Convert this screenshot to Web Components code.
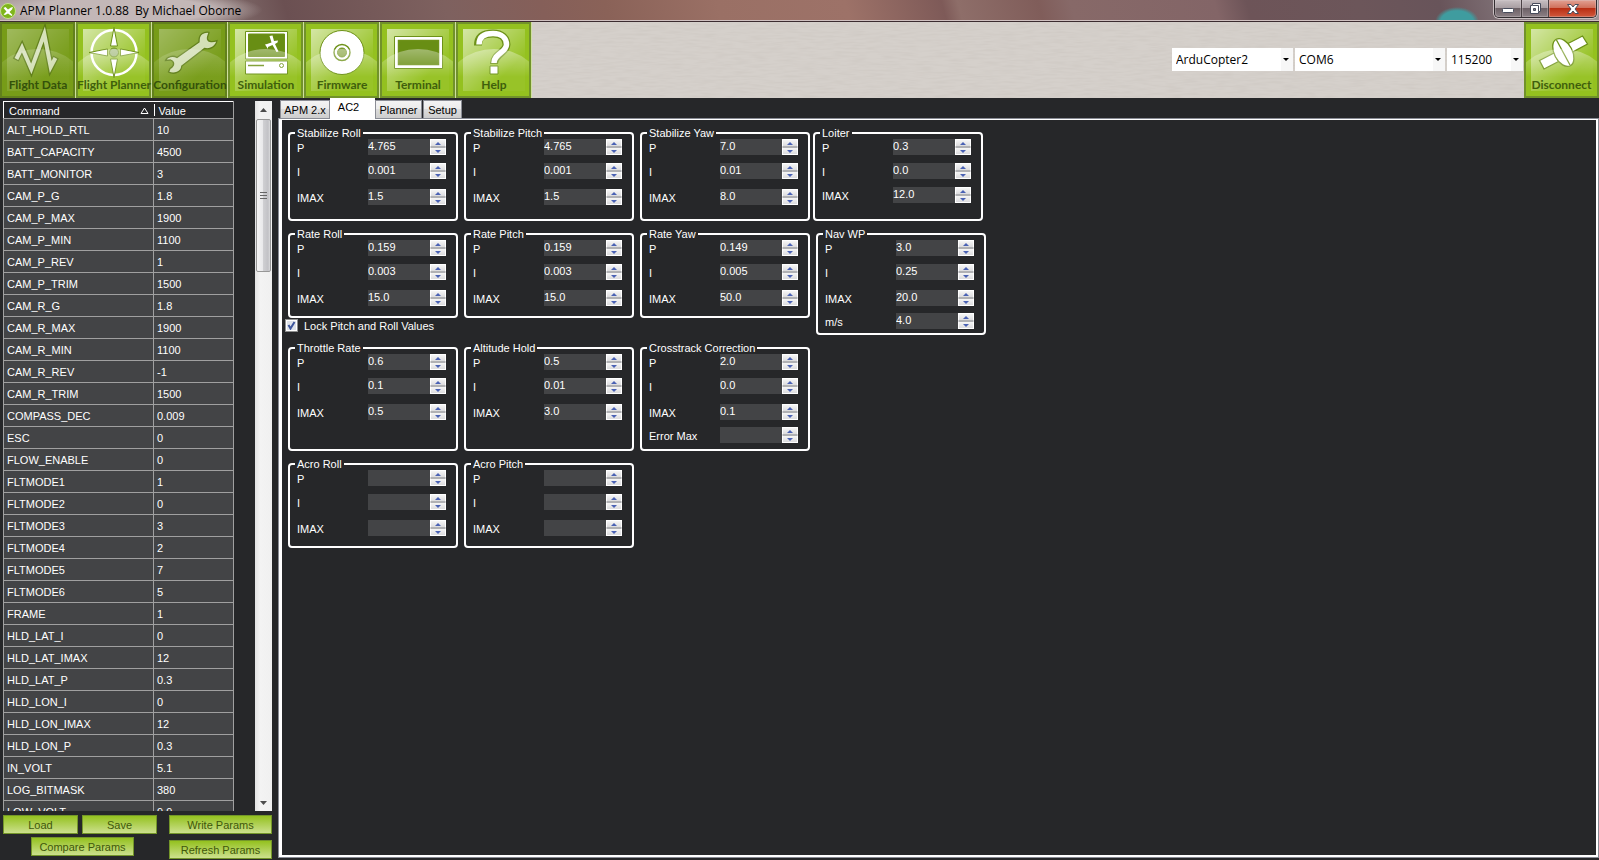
<!DOCTYPE html>
<html lang="en">
<head>
<meta charset="utf-8">
<title>APM Planner 1.0.88</title>
<style>
  html, body { margin: 0; height: 100%; background: #262729; }
  body { font: 11px/14px "Liberation Sans", Arial, sans-serif; color: #fff; }
</style>
</head>
<body>
<apm-window></apm-window>

<template id="t-window">
  <style>
    :host { display: flex; flex-direction: column; height: 100vh; overflow: hidden; }
    main { flex: 1; min-height: 0; display: flex; }
    param-panel { flex: none; }
    tune-tabs { flex: 1; min-width: 0; }
  </style>
  <title-bar>APM Planner 1.0.88  By Michael Oborne</title-bar>
  <tool-bar></tool-bar>
  <main>
    <param-panel></param-panel>
    <tune-tabs></tune-tabs>
  </main>
</template>

<template id="t-title">
  <style>
    :host {
      display: flex; align-items: flex-start; height: 22px; box-sizing: border-box; overflow: hidden;
      border-bottom: 1px solid #3c2c30; box-shadow: inset 0 -1px #cfc0c0;
      font: 12px/22px "Open Sans", "Noto Sans", sans-serif; color: #000;
      background:
        radial-gradient(ellipse 22px 15px at calc(100% - 142px) 22px, #3f9c9f 75%, transparent),
        radial-gradient(ellipse 150px 22px at 120px 10px, #c3b7b7 60%, transparent 95%),
        linear-gradient(75deg, #a89a98 0, #8d7c7a 12%, #6b5052 18%, #7e615f 28%, #855f59 34%, #8a6258 38%,
          #9a7065 45%, #9d7268 53%, #7e5a58 59%, #8e6e69 60%, #805d5a 65%, #876968 67%, #836567 76%,
          #6d5458 78%, #6c565a 85%, #68545a 90%, #85787d 95%, #a19699);
    }
    svg.logo { flex: none; margin: 3px 4px 0 0; }
    h1 { flex: 1; margin: 0; font: inherit; white-space: pre; }
    nav { display: flex; margin-right: 2px; border: 1px solid #322d30; border-top: 0; border-radius: 0 0 5px 5px; box-shadow: 0 0 0 1px #c9bfc1; }
    button { height: 17px; width: 27px; padding: 0; border: 0; border-right: 1px solid #4a4144;
      background: linear-gradient(#c7bfc2 0, #a99fa3 45%, #6d6166 50%, #8b8085 100%); display: grid; place-items: center; box-shadow: inset 0 0 0 1px #d9d0d355; }
    button:first-child { border-radius: 0 0 0 4px; }
    button:last-child { width: 47px; border-right: 0; border-radius: 0 0 4px 0;
      background: linear-gradient(#e2a294 0, #d0715c 45%, #b92f14 50%, #d1583c 100%); }
  </style>
  <svg class="logo" width="16" height="16" viewBox="0 0 16 16" aria-hidden="true">
    <circle cx="8" cy="8" r="7.5" fill="#7fb51c" stroke="#c6e08c"/>
    <path d="M3.500 5 5.500 4 8 6.500 11 4.500 13 4 12 6.500 9.500 9 12.500 12 11.500 13 8 10.500 5 12 3.500 11.500 6.500 8.500Z" fill="#fff"/>
  </svg>
  <h1><slot></slot></h1>
  <nav aria-label="Window">
    <button aria-label="Minimize"><svg width="14" height="12"><rect x="1.500" y="5.500" width="11" height="4" rx="1" fill="#fff" stroke="#474c5c"/></svg></button>
    <button aria-label="Restore"><svg width="14" height="13" fill="none"><path d="M4.500 1.500h8v8h-2v2h-8v-8h2z" fill="#fff" stroke="#474c5c"/><path d="M5.500 6.500h2v2h-2z" fill="#8b8085" stroke="#474c5c"/><path d="M5 3.500h5.500V9" stroke="#474c5c"/></svg></button>
    <button aria-label="Close"><svg width="14" height="12"><path d="M1.500 1.500h3.500l2 2.500 2-2.500h3.500l-3.500 4.500 3.500 4.500h-3.500l-2-2.500-2 2.500H1.500l3.500-4.500z" fill="#fff" stroke="#474c5c"/></svg></button>
  </nav>
</template>

<template id="t-toolbar">
  <style>
    :host { display: flex; align-items: center; height: 76px; position: relative; background: #d5d0cb; }
    .grain { position: absolute; inset: 0; width: 100%; height: 100%; }
    tool-button, drop-down { position: relative; }
    .gap { flex: 1; }
    .combos { display: flex; gap: 2px; margin: 0 1px 0 0; padding-bottom: 1px; }
  </style>
  <svg class="grain" aria-hidden="true">
    <filter id="g"><feTurbulence type="fractalNoise" baseFrequency="0.06 0.5" numOctaves="2"/><feColorMatrix values="0 0 0 0 .5  0 0 0 0 .46  0 0 0 0 .42  .45 0 0 0 -.17"/></filter>
    <rect width="100%" height="100%" filter="url(#g)"/>
  </svg>
  <tool-button icon="data" pressed>Flight Data</tool-button>
  <tool-button icon="planner">Flight Planner</tool-button>
  <tool-button icon="config" pressed>Configuration</tool-button>
  <tool-button icon="sim">Simulation</tool-button>
  <tool-button icon="disc">Firmware</tool-button>
  <tool-button icon="term">Terminal</tool-button>
  <tool-button icon="help">Help</tool-button>
  <div class="gap"></div>
  <div class="combos">
    <drop-down style="width:121px" label="Vehicle" value="ArduCopter2"></drop-down>
    <drop-down style="width:150px" label="Port" value="COM6"></drop-down>
    <drop-down style="width:76px" label="Baud rate" value="115200"></drop-down>
  </div>
  <tool-button icon="plug" last>Disconnect</tool-button>
</template>

<template id="t-toolbutton">
  <style>
    :host { display: block; width: 76px; height: 76px; flex: none; }
    :host([last]) { width: 75px; }
    button { display: block; position: relative; width: 100%; height: 100%; padding: 0; border: 0; overflow: hidden;
      background: #94c11f; font: 700 12px/16px Lato, sans-serif; color: #3f5f0c; }
    svg { position: absolute; left: 0; top: 0; }
    .name { position: absolute; left: -8px; right: -8px; top: 55px; text-align: center; white-space: nowrap; }
    :host([pressed]) button { background: #779c18; color: #34510a; }
    :host([pressed]) .glow { opacity: .5; }
    :host([pressed]) .art { opacity: .65; }
    :host([pressed]) .rim { stroke: #62801c; }
  </style>
  <button>
    <svg width="76" height="76" viewBox="0 0 76 76" aria-hidden="true">
      <defs>
        <linearGradient id="sq" x1="0" y1="0" x2="1" y2="1"><stop offset="0" stop-color="#fff" stop-opacity=".6"/><stop offset=".7" stop-color="#fff" stop-opacity=".04"/></linearGradient>
        <linearGradient id="hill" x1="0" y1="0" x2="0" y2="1"><stop offset="0" stop-color="#fff" stop-opacity=".38"/><stop offset=".35" stop-color="#fff" stop-opacity="0"/></linearGradient>
      </defs>
      <rect class="glow" x="7" y="7" width="62" height="62" fill="url(#sq)"/>
      <g class="art" stroke-linejoin="miter"></g>
      <ellipse class="glow" cx="38" cy="67" rx="48" ry="40" fill="url(#hill)"/>
      <path class="rim" d="M1 1H74V75H1Z" fill="none" stroke="#71922a" stroke-width="2"/>
      <path class="edge" d="M75.500 0V76" stroke="#cfdf9f"/>
    </svg>
    <span class="name"><slot></slot></span>
  </button>
</template>

<template id="t-dropdown">
  <style>
    :host { display: block; }
    select { appearance: none; display: block; width: 100%; height: 23px; margin: 0; padding: 0 18px 0 4px; border: 0; border-radius: 0;
      font: 12px/22px "Open Sans", "Noto Sans", sans-serif; color: #000;
      background: url("data:image/svg+xml,%3Csvg xmlns='http://www.w3.org/2000/svg' width='12' height='23'%3E%3Crect width='12' height='23' fill='%23f7f7f7'/%3E%3Cpath d='M2 10h6l-3 3z'/%3E%3C/svg%3E") right center no-repeat #fff; }
  </style>
  <select></select>
</template>

<template id="t-params">
  <style>
    :host { display: flex; flex-direction: column; width: 278px; box-sizing: border-box; padding: 3px 6px 0 3px; color: #fff; }
    .list { flex: 1; min-height: 0; display: flex; justify-content: space-between; overflow: hidden; }
    .clip { overflow: hidden; width: 231px; }
    table { border-collapse: collapse; table-layout: fixed; width: 231px; }
    th, td { border: 1px solid #a0a0a0; padding: 0 0 0 3px; font-weight: normal; text-align: left; box-sizing: border-box; white-space: nowrap; line-height: 14px; }
    th { height: 17px; padding: 1px 5px 0; border-top-color: #fff; position: relative; }
    th:first-child { width: 150px; border-left-color: #fff; border-right: 0; }
    th:last-child { border-left: 0; }
    th span { display: flex; justify-content: space-between; align-items: center; }
    th i { position: absolute; left: 0; top: 2px; bottom: 2px; width: 1px; background: #fff; }
    td { height: 22px; background: #434446; }
    .actions { display: flex; gap: 7px; padding-top: 4px; height: 49px; box-sizing: border-box; }
    .left { width: 159px; display: flex; flex-direction: column; gap: 3px; align-items: center; }
    .pair { display: flex; gap: 4px; align-self: flex-start; }
    .right { display: flex; flex-direction: column; gap: 6px; }
  </style>
  <div class="list">
    <div class="clip">
      <table>
        <thead><tr><th><span>Command <svg width="9" height="8" fill="none" stroke="#fff" aria-hidden="true"><path d="M1 6.500h7L4.500 1z"/></svg></span></th><th><i></i>Value</th></tr></thead>
        <tbody></tbody>
      </table>
    </div>
    <scroll-bar></scroll-bar>
  </div>
  <div class="actions">
    <div class="left">
      <div class="pair"><green-button style="width:75px">Load</green-button><green-button style="width:75px">Save</green-button></div>
      <green-button>Compare Params</green-button>
    </div>
    <div class="right"><green-button>Write Params</green-button><green-button>Refresh Params</green-button></div>
  </div>
</template>

<template id="t-green">
  <style>
    :host { display: block; width: 103px; }
    button { display: block; width: 100%; height: 19px; padding: 0; border: 1px solid #749629; font: inherit; color: #40570b;
      background: linear-gradient(#94c11f, #cce08d); }
  </style>
  <button><slot></slot></button>
</template>

<template id="t-scroll">
  <style>
    :host { display: flex; flex-direction: column; width: 17px; background: linear-gradient(90deg, #e3e3e3, #f3f3f3 30%, #f0f0f0); }
    button { height: 17px; padding: 0; border: 0; background: none; display: grid; place-items: center; }
    .track { flex: 1; padding: 1px 1px 0; }
    .thumb { height: 153px; box-sizing: border-box; border: 1px solid #979797; border-radius: 2px; display: grid; place-items: center;
      background: linear-gradient(90deg, #f5f5f5 0, #e9e9eb 45%, #cfcfd2 50%, #c2c2c6 85%, #dadadc); }
  </style>
  <button aria-label="Scroll up"><svg width="8" height="4"><path d="M0 4h7L3.500 0z" fill="#4c4c4c"/></svg></button>
  <div class="track"><div class="thumb"><svg width="8" height="8" stroke="#666"><path d="M0 .500h7M0 3.500h7M0 6.500h7"/></svg></div></div>
  <button aria-label="Scroll down"><svg width="8" height="4"><path d="M0 0h7L3.500 4z" fill="#4c4c4c"/></svg></button>
</template>

<template id="t-tabs">
  <style>
    :host { display: flex; flex-direction: column; padding-bottom: 2px; }
    .tabs { display: flex; align-items: flex-end; gap: 1px; height: 20px; padding-left: 2px; }
    .tabs button { height: 18px; box-sizing: border-box; padding: 0; border: 1px solid #8b8d95; border-bottom: 0; font: inherit; color: #000; white-space: nowrap;
      background: linear-gradient(#f3f3f3 0, #ebebeb 50%, #dcdcdc 50%, #cdcdcd); }
    .tabs button.on { height: 21px; margin: 0 -1px -1px; z-index: 1; padding: 0 8px 4px 0; background: #fff; border-color: #fff; }
    .page { flex: 1; display: flex; align-items: flex-start; padding: 7px 3px; border: solid #fff; border-width: 1px 2px 2px 3px; outline: 1px solid #898c95; margin: 1px 1px 1px; }
    .left { width: 525px; display: flex; flex-direction: column; }
    .rows { display: grid; grid-template-columns: repeat(3, 170px); gap: 7px 6px; padding-left: 3px; }
    .rows + label + .rows { margin-top: 9px; }
    label { display: flex; align-items: center; gap: 6px; height: 15px; }
    input { appearance: none; margin: 0; width: 13px; height: 13px; border: 1px solid #8e8f8f; box-shadow: inset 0 0 0 1px #fff;
      background: url("data:image/svg+xml,%3Csvg xmlns='http://www.w3.org/2000/svg' width='11' height='11'%3E%3Cpath d='M2.500 5l2 3.500L8.500 2' fill='none' stroke='%233d559c' stroke-width='2'/%3E%3C/svg%3E") #dfe3ea; }
    .right { width: 173px; margin-left: 3px; display: flex; flex-direction: column; align-items: flex-start; gap: 7px; }
    .right pid-group { width: 170px; }
    .right pid-group:last-child { align-self: flex-end; }
    .r1 { --bottom: 14px; } .r2, .r4 { --bottom: 10px; } .r3 { --bottom: 6px; }
    .loiter { --bottom: 16px; } .nav { --bottom: 4px; }
  </style>
  <div class="tabs" role="tablist">
    <button role="tab" style="width:50px">APM 2.x</button>
    <button role="tab" style="width:45px" class="on" aria-selected="true">AC2</button>
    <button role="tab" style="width:47px">Planner</button>
    <button role="tab" style="width:39px">Setup</button>
  </div>
  <div class="page" role="tabpanel">
    <div class="left">
      <div class="rows">
        <pid-group class="r1" values="P:4.765,I:0.001,IMAX:1.5">Stabilize Roll</pid-group>
        <pid-group class="r1" values="P:4.765,I:0.001,IMAX:1.5">Stabilize Pitch</pid-group>
        <pid-group class="r1" values="P:7.0,I:0.01,IMAX:8.0">Stabilize Yaw</pid-group>
        <pid-group class="r2" values="P:0.159,I:0.003,IMAX:15.0">Rate Roll</pid-group>
        <pid-group class="r2" values="P:0.159,I:0.003,IMAX:15.0">Rate Pitch</pid-group>
        <pid-group class="r2" values="P:0.149,I:0.005,IMAX:50.0">Rate Yaw</pid-group>
      </div>
      <label><input type="checkbox" checked>Lock Pitch and Roll Values</label>
      <div class="rows">
        <pid-group class="r3" values="P:0.6,I:0.1,IMAX:0.5">Throttle Rate</pid-group>
        <pid-group class="r3" values="P:0.5,I:0.01,IMAX:3.0">Altitude Hold</pid-group>
        <pid-group class="r3" values="P:2.0,I:0.0,IMAX:0.1,Error Max:">Crosstrack Correction</pid-group>
        <pid-group class="r4" values="P:,I:,IMAX:">Acro Roll</pid-group>
        <pid-group class="r4" values="P:,I:,IMAX:">Acro Pitch</pid-group>
      </div>
    </div>
    <div class="right">
      <pid-group class="loiter" compact values="P:0.3,I:0.0,IMAX:12.0">Loiter</pid-group>
      <pid-group class="nav" values="P:3.0,I:0.25,IMAX:20.0,m/s:4.0">Nav WP</pid-group>
    </div>
  </div>
</template>

<template id="t-group">
  <style>
    :host { display: grid; }
    fieldset { margin: 0; min-width: 0; padding: 0 0 var(--bottom); border: 2px solid #fff; border-radius: 4px; }
    legend { margin-left: 5px; padding: 0 2px; line-height: 12px; }
    .fields { display: grid; grid-template-rows: 24px 26px; grid-auto-rows: 16px; padding-left: 7px; align-items: start; }
    .fields.four { grid-template-rows: 24px 26px 23px; }
    :host([compact]) .fields { grid-template-rows: 24px 24px; }
  </style>
  <fieldset><legend><slot></slot></legend><div class="fields"></div></fieldset>
</template>

<template id="t-field">
  <style>
    :host { display: flex; height: 16px; }
    label { width: 71px; line-height: 18px; }
    input { width: 62px; height: 16px; box-sizing: border-box; margin: 0; padding: 0 0 2px; border: 0; border-radius: 0; background: #434446; color: #fff; font: inherit; }
    .spin { display: flex; flex-direction: column; width: 16px; }
    button { flex: 1; padding: 0; border: 1px solid #fff; background: linear-gradient(#f6f6f6, #dcdcde); display: grid; place-items: center; }
    button:first-child { border-bottom-color: #b0b1b4; }
    button:last-child { border-top-color: #b0b1b4; }
    svg { display: block; }
  </style>
  <label for="v"></label>
  <input id="v" type="text">
  <span class="spin">
    <button aria-label="Increase"><svg width="6" height="3"><path d="M0 3h6L3 0z" fill="#4a62b4"/></svg></button>
    <button aria-label="Decrease"><svg width="6" height="3"><path d="M0 0h6L3 3z" fill="#4a62b4"/></svg></button>
  </span>
</template>

<script>
const ICONS = {
  data: `<path d="M15.700 38 22 25.500 31.300 47 44.300 12 50.700 45 56 35" fill="none" stroke="#4f6c10" stroke-width="6.500"/>
    <path d="M16.400 37 22 25.500 31.300 47 44.300 12 50.700 45 55.400 36" fill="none" stroke="#fff" stroke-width="4"/>`,
  planner: `<g stroke="#6d9118"><circle cx="38" cy="30.500" r="22.500" fill="none" stroke="#fff" stroke-width="2.500"/>
    <path d="M38 5.500 41.500 24h-7zM38 55.500 41.500 37h-7zM13 30.500 31.500 27v7zM63 30.500 44.500 27v7z" fill="#fff"/>
    <circle cx="38" cy="30.500" r="4.500" fill="#a0b87a"/></g>`,
  config: `<path d="M57 10.300C52 9.500 46.500 12 47 20L25 35.500C21 33 15 34.500 13.500 38.500L18.500 38C22.500 39.500 23 43.500 18 46.500L16.500 50C22 53 29.500 50 29.800 44L52.500 26.500C58 28 64 24.500 65 18.700C61 20 56.500 20.500 55.500 17C55 14 57 12.500 57 10.300Z" fill="#fff" stroke="#4f6c10" stroke-width="1.300"/>`,
  sim: `<g stroke="#6d9118"><path d="M17.500 9.500h42v27.500h-42zM17.500 39h42v13h-42z" fill="#fff"/><path d="M20.500 12h36v22.500h-36z" fill="#688e14"/>
    <path d="M20 43.500h16" stroke-width="1.500"/><circle cx="53.500" cy="43.500" r="2" fill="none"/></g>
    <path d="M41.500 14 44.500 13.500 46 19 50 18.500 49.500 20.500 47 22 50.500 29.500 48.500 30 44.500 23 40 25 40 27 38 24 37 22.500 39 22 43.500 20.500Z" fill="#fff"/>`,
  disc: `<g stroke="#6d9118"><circle cx="38" cy="30.500" r="22" fill="#fff"/><circle cx="38" cy="30.500" r="8" fill="#fff" stroke-width="1.500"/><circle cx="38" cy="30.500" r="4.500" fill="#84a23c"/></g>`,
  term: `<g stroke="#6d9118"><path d="M14.500 14.500h48v32h-48z" fill="#fff"/><path d="M18.500 18.500h40v24h-40z" fill="#688e14" stroke-width="1.500"/></g>`,
  help: `<g fill="none"><path d="M22 23.500C22 14 28 11.500 37 11.500C46 11.500 50.500 16.500 50.500 22.500C50.500 30.500 38 31.500 38 42" stroke="#6d9118" stroke-width="8"/>
    <path d="M23 22.500C23 14 29 11.500 37 11.500C46 11.500 50.500 16.500 50.500 22.500C50.500 30.500 38 31.500 38 41" stroke="#fff" stroke-width="5.500"/></g>
    <path d="M34 44h8v8h-8z" fill="#fff" stroke="#6d9118"/>`,
  plug: `<g fill="#fff" stroke="#6d9118" stroke-width="1.300"><path d="M15.500 38.500 30 31 34.500 39.500 20 47zM44 21.500 58.500 14 63.500 22 48.500 30z"/>
    <ellipse cx="39.300" cy="30.500" rx="9" ry="15" transform="rotate(-28 39.300 30.500)"/><path d="M32.500 18 46 43"/></g>`
};

const PARAMS = [
  ["ALT_HOLD_RTL","10"],["BATT_CAPACITY","4500"],["BATT_MONITOR","3"],["CAM_P_G","1.8"],["CAM_P_MAX","1900"],["CAM_P_MIN","1100"],
  ["CAM_P_REV","1"],["CAM_P_TRIM","1500"],["CAM_R_G","1.8"],["CAM_R_MAX","1900"],["CAM_R_MIN","1100"],["CAM_R_REV","-1"],
  ["CAM_R_TRIM","1500"],["COMPASS_DEC","0.009"],["ESC","0"],["FLOW_ENABLE","0"],["FLTMODE1","1"],["FLTMODE2","0"],["FLTMODE3","3"],
  ["FLTMODE4","2"],["FLTMODE5","7"],["FLTMODE6","5"],["FRAME","1"],["HLD_LAT_I","0"],["HLD_LAT_IMAX","12"],["HLD_LAT_P","0.3"],
  ["HLD_LON_I","0"],["HLD_LON_IMAX","12"],["HLD_LON_P","0.3"],["IN_VOLT","5.1"],["LOG_BITMASK","380"],["LOW_VOLT","9.9"]
];

function define(name, templateId, setup) {
  customElements.define(name, class extends HTMLElement {
    constructor() {
      super();
      this.attachShadow({ mode: "open" }).append(document.getElementById(templateId).content.cloneNode(true));
    }
    connectedCallback() {
      if (setup && !this.ready) { this.ready = true; setup(this, this.shadowRoot); }
    }
  });
}

define("title-bar", "t-title");
define("drop-down", "t-dropdown", (el, root) => {
  const select = root.querySelector("select");
  select.setAttribute("aria-label", el.getAttribute("label"));
  select.add(new Option(el.getAttribute("value")));
});
define("tool-button", "t-toolbutton", (el, root) => {
  root.querySelector(".art").innerHTML = ICONS[el.getAttribute("icon")];
});
define("tool-bar", "t-toolbar");
define("green-button", "t-green");
define("scroll-bar", "t-scroll");
define("param-panel", "t-params", (el, root) => {
  const body = root.querySelector("tbody");
  for (const pair of PARAMS) {
    const row = body.insertRow();
    for (const text of pair) row.insertCell().textContent = text;
  }
});
define("pid-field", "t-field", (el, root) => {
  root.querySelector("label").textContent = el.getAttribute("label");
  root.querySelector("input").value = el.getAttribute("value");
});
define("pid-group", "t-group", (el, root) => {
  const box = root.querySelector(".fields");
  const items = el.getAttribute("values").split(",");
  box.classList.toggle("four", items.length === 4);
  for (const item of items) {
    const [label, value] = item.split(":");
    const field = document.createElement("pid-field");
    field.setAttribute("label", label);
    field.setAttribute("value", value);
    box.append(field);
  }
});
define("tune-tabs", "t-tabs");
define("apm-window", "t-window");
</script>
</body>
</html>
